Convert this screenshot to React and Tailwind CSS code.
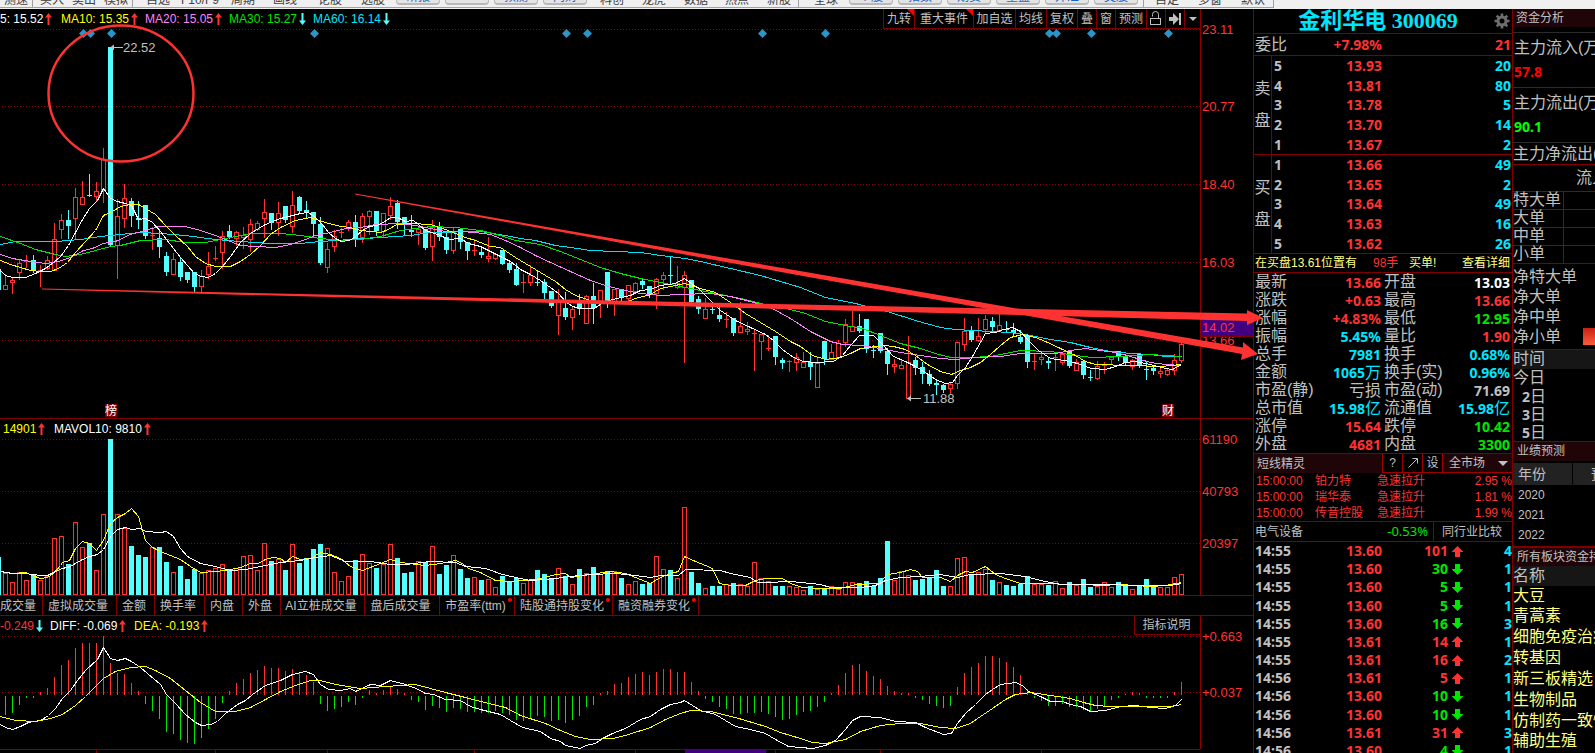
import { Fragment } from 'react'

// [up, high, body top, body bottom, low]
const candles = [
  [1,274,285,289,289],[1,277,280,282,293],[1,259,263,272,279],[1,255,261,262,267],[0,255,260,270,272],[1,265,270,271,286],
  [1,256,260,268,269],[1,223,239,270,270],[1,214,220,229,238],[0,210,220,226,238],[1,188,197,218,239],[1,181,197,204,204],
  [0,174,195,195,196],[1,182,191,196,201],[1,148,159,190,202],[0,47,47,245,246],[1,199,216,245,278],[1,184,198,218,227],
  [0,198,201,216,226],[0,201,218,220,228],[0,205,205,236,238],[1,227,235,236,249],[0,229,238,247,257],[0,252,256,272,275],
  [1,253,259,274,274],[0,258,262,277,280],[0,272,272,280,282],[0,272,272,287,291],[1,270,276,286,293],[1,252,266,274,278],
  [1,246,258,259,260],[1,231,236,252,268],[0,225,231,237,238],[1,231,232,238,245],[1,227,235,237,248],[1,219,224,239,251],
  [1,221,223,229,230],[1,199,212,218,237],[0,213,213,223,229],[1,202,213,222,235],[0,206,206,220,222],[1,191,205,226,232],
  [0,196,197,211,212],[0,201,210,212,217],[0,212,212,224,236],[0,217,224,263,264],[1,243,249,267,272],[1,230,236,246,251],
  [1,228,232,233,237],[1,220,222,227,230],[0,215,222,240,246],[1,213,216,237,242],[1,210,211,216,234],[0,211,211,231,235],
  [1,213,213,231,237],[1,197,206,215,219],[0,200,203,222,228],[0,217,217,225,234],[0,215,230,232,236],[1,227,229,232,244],
  [0,229,229,248,249],[1,220,227,246,260],[0,222,227,237,240],[0,233,237,250,253],[1,227,231,250,253],[0,228,229,242,248],
  [0,242,242,251,259],[1,239,250,251,255],[0,247,252,255,257],[1,237,256,258,261],[1,253,254,258,259],[0,250,250,264,264],
  [0,261,263,270,272],[0,263,269,285,285],[1,274,282,283,292],[1,265,275,282,285],[0,270,282,283,285],[0,279,282,293,298],
  [0,291,291,306,307],[1,289,302,315,334],[0,292,308,317,319],[1,306,309,317,329],[0,294,300,309,314],[1,295,296,323,323],
  [0,283,296,308,323],[1,290,290,303,317],[0,272,272,304,307],[1,289,289,302,315],[0,289,289,298,301],[1,285,285,298,302],
  [1,282,283,291,292],[0,278,281,285,288],[0,286,286,294,297],[1,278,279,293,308],[1,272,275,279,289],[0,257,275,276,283],
  [1,266,283,287,288],[1,271,275,287,362],[0,280,280,302,302],[0,296,299,309,313],[1,298,309,318,318],[0,307,309,310,313],
  [0,307,315,319,321],[1,312,319,320,327],[0,318,318,333,335],[1,302,326,332,332],[1,322,329,331,334],[1,329,333,334,370],
  [1,334,334,341,359],[1,335,348,349,350],[0,336,336,357,364],[0,358,360,363,368],[1,360,361,362,371],[1,353,357,362,370],
  [1,352,362,367,367],[0,352,362,367,379],[1,357,363,387,387],[0,341,341,359,364],[1,344,352,359,359],[1,340,343,357,357],
  [1,319,324,342,346],[1,311,326,331,331],[0,314,326,331,332],[0,319,319,349,352],[0,345,350,351,357],[0,333,333,351,352],
  [0,348,351,364,374],[1,359,364,366,372],[1,360,365,368,368],[1,336,362,398,398],[0,357,360,368,374],[0,362,367,374,383],
  [0,370,374,384,385],[0,379,383,385,394],[0,384,385,390,392],[1,382,384,388,393],[1,342,342,383,388],[1,318,331,344,350],
  [0,326,331,340,341],[1,318,336,340,341],[1,315,319,329,332],[0,317,321,327,330],[1,313,325,330,331],[0,321,329,330,331],
  [0,323,330,333,336],[0,330,337,342,343],[0,334,335,362,367],[1,354,361,362,369],[1,353,357,359,364],[0,357,361,363,368],
  [1,353,357,358,370],[1,353,354,362,364],[0,351,351,366,367],[1,359,362,370,370],[0,361,361,375,378],[0,370,377,378,380],
  [1,361,366,378,379],[1,362,365,366,373],[1,357,357,359,364],[0,351,351,357,360],[0,354,357,363,364],[1,359,360,366,369],
  [0,353,354,366,367],[0,362,369,370,379],[0,366,368,371,374],[1,367,371,373,377],[1,369,370,374,375],[1,354,360,370,374],
  [1,341,344,360,362],
]

const volumes = [
  573,582,572,580,575,580,576,538,536,564,522,547,543,570,514,439,514,528,546,555,557,547,547,562,572,566,579,569,573,570,
  568,564,569,568,556,555,570,543,561,559,570,544,563,558,549,544,548,572,581,576,560,554,563,568,564,544,558,573,572,561,
  562,546,574,565,555,569,578,577,580,579,587,576,581,578,583,580,570,574,578,568,576,584,569,573,567,574,571,571,578,584,
  581,584,583,556,569,570,578,507,572,583,588,586,586,584,583,584,586,562,578,581,586,586,586,587,590,586,589,589,586,589,
  582,582,583,581,586,578,541,580,571,575,580,579,577,570,586,586,558,557,574,572,569,580,582,585,586,584,576,584,584,585,
  581,588,582,585,579,587,586,582,587,582,586,589,586,579,587,587,587,577,574,
]

const histogram = [
  714,712,704,697,697,692,688,677,665,660,648,643,643,643,636,663,673,674,683,691,703,710,718,731,733,739,742,743,737,728,
  718,702,691,683,679,673,670,666,668,668,671,669,672,675,682,703,710,708,706,701,704,697,690,693,690,686,689,693,699,701,
  709,705,707,711,707,708,711,711,712,712,710,712,714,719,720,717,715,716,720,719,722,719,715,706,704,693,691,684,683,677,
  674,672,675,672,669,669,672,672,682,691,698,701,706,708,713,713,712,712,711,713,716,719,718,714,711,710,706,701,693,685,
  673,665,664,671,676,679,686,691,693,693,697,699,703,705,707,705,687,673,667,663,656,656,658,662,667,675,689,697,700,705,
  705,703,706,706,709,711,708,705,699,697,694,692,693,697,697,697,697,692,682,
]

const priceLines = [
  { color: '#00e0f0', points: '0,244 15,241 55,241 80,239 100,236 120,234 140,232 160,233 185,235 215,239 240,241 270,243 300,243 320,241 350,239 380,237 410,235 430,232 480,231 505,235 520,238 535,240 555,245 570,247 590,250 640,252 660,255 685,258 700,261 730,268 760,275 780,281 800,287 825,297 855,303 890,312 915,320 940,327 955,329 990,331 1010,332 1030,335 1050,339 1070,342 1090,347 1110,351 1130,353 1150,354 1165,356 1181,356' },
  { color: '#00e600', points: '0,236 20,243 35,249 55,254 65,256 80,254 95,250 110,246 120,245 140,240 165,239 185,242 205,242 225,238 250,233 280,233 300,235 320,238 340,240 360,239 380,236 400,230 415,228 430,226 455,227 480,230 500,235 515,240 540,244 560,251 580,259 600,267 620,273 640,278 660,282 680,286 700,290 720,294 740,298 760,303 790,309 805,313 825,321 845,325 862,328 880,335 900,343 920,348 935,353 950,357 970,357 990,356 1005,353 1020,350 1050,351 1075,355 1092,357 1120,356 1150,354 1165,355 1181,356' },
  { color: '#ff80ff', points: '0,254 12,258 30,261 45,263 58,261 70,257 83,250 92,248 103,243 115,241 130,234 145,230 158,226 185,226 200,230 215,235 225,239 240,245 255,246 275,247 290,244 305,239 315,235 330,232 345,228 360,227 375,224 400,223 415,225 430,228 445,231 460,231 475,232 490,234 505,240 520,247 535,255 550,262 570,271 590,280 605,285 620,289 640,293 660,295 680,294 710,293 730,296 750,301 770,307 790,318 810,331 820,336 830,341 842,344 860,345 880,348 900,352 920,355 940,358 955,359 975,357 1000,356 1020,353 1055,353 1070,350 1085,348 1100,350 1115,352 1130,356 1150,362 1165,364 1181,365' },
  { color: '#ffff00', points: '0,260 10,264 20,267 30,270 40,271 50,271 58,268 67,262 75,252 85,241 95,230 103,215 112,211 120,206 130,204 138,204 145,208 155,214 165,225 175,235 187,246 195,256 205,263 215,266 230,266 240,261 250,254 260,245 270,234 280,227 295,220 310,217 325,222 340,226 350,227 360,230 370,231 380,232 388,229 396,224 410,223 430,224 445,229 455,233 465,237 475,240 490,246 500,247 515,257 530,266 545,275 555,281 565,289 575,295 590,300 610,303 625,302 635,298 650,294 660,288 670,286 684,283 700,288 715,292 730,302 745,313 760,322 775,331 790,341 800,346 812,355 825,359 840,357 850,353 860,348 883,345 893,346 905,349 915,355 927,364 940,371 951,374 960,370 970,367 980,362 990,354 1000,345 1010,337 1022,334 1035,337 1045,341 1060,348 1075,355 1085,361 1095,364 1130,365 1160,366 1181,364' },
  { color: '#ffffff', points: '0,270 5,275 12,277 25,277 35,273 45,268 53,262 60,256 68,245 75,232 82,219 89,208 97,200 103,188 110,198 117,201 125,203 131,205 138,219 145,218 152,222 160,231 166,239 180,257 194,273 201,276 208,277 215,273 222,266 230,256 240,242 250,233 258,228 265,224 272,221 280,218 292,215 300,213 308,212 315,217 322,224 328,232 335,238 341,241 349,240 355,236 362,230 369,226 376,225 383,222 390,217 397,217 405,221 413,220 425,230 440,235 448,239 460,238 468,243 480,246 490,251 500,256 510,261 520,269 530,274 540,280 550,287 558,293 565,301 572,306 580,308 594,308 601,303 612,299 630,295 640,290 650,289 660,285 675,283 684,278 691,283 698,288 710,300 720,310 735,320 750,327 765,334 773,340 782,349 793,357 803,361 815,362 833,361 842,355 850,345 859,335 873,335 882,344 893,356 905,361 915,366 925,372 935,379 945,383 952,382 957,375 965,367 972,356 980,342 985,333 995,332 1003,329 1012,327 1020,331 1028,340 1038,350 1050,358 1070,361 1080,364 1091,368 1105,369 1115,366 1125,362 1135,361 1150,364 1165,368 1172,369 1181,364' },
]

const volumeLines = [
  { color: '#ffff00', points: '0,571 12,573 25,572 32,575 40,578 47,577 53,573 60,565 62,562 69,560 75,548 82,541 89,543 96,550 103,540 110,523 117,517 125,513 131,508 138,516 145,540 152,547 160,551 170,555 180,559 190,566 200,572 215,571 225,570 240,567 250,563 258,563 265,559 272,557 280,558 285,562 292,556 300,559 310,558 320,552 330,554 340,558 350,566 362,570 375,565 390,559 400,562 425,565 440,563 455,560 462,563 468,568 480,572 495,580 510,581 525,580 540,578 555,574 565,573 570,577 590,574 610,571 625,573 640,579 650,583 660,577 670,573 678,571 684,556 695,561 705,565 712,568 719,583 730,585 745,585 755,580 765,578 782,578 790,583 802,587 820,588 840,588 855,584 878,583 887,574 900,572 910,569 917,571 922,577 940,577 950,581 957,575 965,571 972,572 985,566 995,574 1005,578 1020,583 1055,583 1062,584 1085,584 1100,585 1120,584 1150,586 1165,585 1181,582' },
  { color: '#ffffff', points: '0,571 12,573 25,573 40,575 47,575 55,571 62,568 70,566 80,560 89,556 97,554 103,549 110,536 117,529 125,527 131,529 140,528 145,531 160,532 166,531 173,536 180,548 187,556 200,563 215,566 230,570 245,569 265,565 280,562 300,560 315,557 330,555 345,561 370,561 390,564 405,564 430,561 455,562 465,566 485,568 502,574 520,578 530,580 555,578 570,576 590,574 615,573 635,575 650,577 660,575 678,575 685,569 720,570 730,573 750,577 757,582 765,582 790,581 800,582 820,584 830,587 860,587 875,585 885,580 900,577 920,576 940,574 957,577 970,574 1000,573 1025,576 1040,580 1060,584 1100,584 1140,585 1170,585 1181,583' },
]

const macdLines = [
  { color: '#ffffff', points: '0,724 5,727 12,729 20,726 28,722 40,720 48,715 55,708 62,698 70,690 77,680 85,670 97,659 103,647 110,658 117,660 125,658 131,661 140,667 147,673 160,684 166,694 175,703 185,714 195,722 201,725 210,724 217,721 225,713 237,704 245,700 252,694 265,685 280,680 292,674 305,671 313,674 320,684 328,689 340,690 350,688 355,691 370,684 380,685 390,680 405,684 418,689 425,693 433,694 445,699 460,700 470,706 480,709 500,714 510,720 522,727 540,731 550,738 560,741 565,745 580,748 585,745 595,743 602,738 612,733 625,728 640,719 650,716 660,709 670,704 680,702 684,700 692,705 700,710 715,714 725,720 735,726 750,729 765,733 775,739 788,746 812,748 825,745 835,740 845,729 852,720 860,716 880,717 895,721 915,722 925,727 943,734 951,733 957,723 965,713 975,704 985,694 992,689 1000,684 1015,682 1022,685 1028,691 1040,696 1050,701 1062,701 1070,704 1080,706 1090,711 1105,710 1120,706 1135,705 1150,707 1165,708 1175,705 1181,699' },
  { color: '#ffff00', points: '0,716 15,720 35,721 50,718 62,714 75,705 85,696 95,686 103,678 115,671 130,667 145,666 155,670 170,678 185,690 200,702 215,711 235,711 250,707 265,699 280,691 295,685 310,680 320,680 335,684 360,688 385,686 415,684 445,692 465,697 480,701 505,707 520,715 545,723 560,730 575,736 590,739 612,738 625,735 650,727 665,719 680,713 690,710 710,711 735,717 765,726 780,732 800,738 812,742 825,743 845,739 860,731 880,725 900,723 920,723 940,727 955,728 970,723 980,716 992,708 1005,699 1015,694 1030,692 1050,695 1070,698 1083,702 1095,705 1110,706 1150,706 1170,706 1181,704' },
]

const diamonds = [83, 90, 111, 314, 566, 587, 762, 825, 1049, 1056, 1091, 1168]

const menu = [
  ['测速', 'w-[28px]'], ['|', 'w-[8px]'], ['买入', 'w-[32px]'], ['卖出', 'w-[32px]'], ['模拟', 'w-[28px]'], ['|', 'w-[14px]'],
  ['自选', 'w-[35px]'], ['F10/F9', 'w-[50px]'], ['周期', 'w-[42px]'], ['画线', 'w-[45px]'], ['论股', 'w-[43px]'], ['选股', 'w-[35px]'],
  ['研报', 'blue'], ['', 'blue'], ['预测', 'blue'], ['问财', 'blue'], ['', 'w-[8px]'],
  ['科创', 'w-[42px]'], ['龙虎', 'w-[42px]'], ['数据', 'w-[41px]'], ['热点', 'w-[42px]'], ['新股', 'w-[31px]'], ['|', 'w-[16px]'], ['全球', 'w-[35px]'],
  ['个股', 'blue'], ['指数', 'blue'], ['期货', 'blue'], ['全盘', 'blue'], ['外汇', 'blue'], ['美股', 'blue'], ['|', 'w-[12px]'],
  ['自定', 'w-[43px]'], ['多窗', 'w-[43px]'], ['默认', 'w-[32px]'],
]

const chartTools = [
  ['九转', 'w-[31px]', true], ['重大事件', 'w-[59px]', true], ['加自选', 'w-[42px]'], ['均线', 'w-[31px]'],
  ['复权', 'w-[31px]'], ['叠', 'w-[19px]'], ['窗', 'w-[19px]'], ['预测', 'w-[31px]'],
]

const tabs = [
  ['虚拟成交量', 'w-[74px]'], ['金额', 'w-[38px]'], ['换手率', 'w-[50px]'], ['内盘', 'w-[38px]'],
  ['外盘', 'w-[38px]'], ['AI立桩成交量', 'w-[84px]'], ['盘后成交量', 'w-[75px]'], ['市盈率(ttm)', 'w-[75px]', true],
  ['陆股通持股变化', 'w-[98px]', true], ['融资融券变化', 'w-[86px]', true],
]

const sells = [[5, '13.93', 20], [4, '13.81', 80], [3, '13.78', 5], [2, '13.70', 14], [1, '13.67', 2]]
const buys = [[1, '13.66', 49], [2, '13.65', 2], [3, '13.64', 49], [4, '13.63', 16], [5, '13.62', 26]]

const RED = 'text-[#ff3232]'
const GREEN = 'text-[#00e600]'
const CYAN = 'text-[#00e6ff]'
const GRAY = 'text-[#c0c0c0]'

const stats = [
  ['最新', '13.66', RED, '', '开盘', '13.03', 'text-white', ''],
  ['涨跌', '+0.63', RED, '', '最高', '13.66', RED, ''],
  ['涨幅', '+4.83%', RED, '', '最低', '12.95', GREEN, ''],
  ['振幅', '5.45%', CYAN, '', '量比', '1.90', RED, ''],
  ['总手', '7981', CYAN, '', '换手', '0.68%', CYAN, ''],
  ['金额', '1065', CYAN, '万', '换手(实)', '0.96%', CYAN, ''],
  ['市盈(静)', '', GRAY, '亏损', '市盈(动)', '71.69', GRAY, ''],
  ['总市值', '15.98', CYAN, '亿', '流通值', '15.98', CYAN, '亿'],
  ['涨停', '15.64', RED, '', '跌停', '10.42', GREEN, ''],
  ['外盘', '4681', RED, '', '内盘', '3300', GREEN, ''],
]

const alerts = [['铂力特', '2.95'], ['瑞华泰', '1.81'], ['传音控股', '1.99']]

const ticks = [
  ['14:55', '13.60', 101, true, 4], ['14:55', '13.60', 30, false, 1], ['14:55', '13.60', 5, false, 1],
  ['14:55', '13.60', 5, false, 1], ['14:55', '13.60', 16, false, 3], ['14:55', '13.61', 14, true, 1],
  ['14:55', '13.61', 16, true, 2], ['14:56', '13.61', 5, true, 1], ['14:56', '13.60', 10, false, 1],
  ['14:56', '13.60', 10, false, 1], ['14:56', '13.61', 31, true, 3], ['14:56', '13.60', 4, false, 1],
]

const sectors = ['大豆', '青蒿素', '细胞免疫治疗', '转基因', '新三板精选', '生物制品', '仿制药一致性', '辅助生殖']

const NUM = 'font-["Noto_Sans","Noto_Sans_CJK_SC",sans-serif] text-sm font-bold'

function TrendArrow({ up }) {
  return (
    <svg className="h-3 w-[7px] shrink-0" viewBox="0 0 7 12" fill={up ? '#ff3232' : '#54ffff'} aria-hidden="true">
      <path d={up ? 'M3.5 0 7 4.5H4.5V12h-2V4.5H0z' : 'M3.5 12 7 7.5H4.5V0h-2v7.5H0z'} />
    </svg>
  )
}

function Legend({ color, width, children, up }) {
  return (
    <span className={`flex shrink-0 items-center gap-[2px] whitespace-nowrap ${color} ${width}`}>
      {children}
      <TrendArrow up={up} />
    </span>
  )
}

function Grid({ rows }) {
  return rows.map(y => (
    <line key={y} x1="2" x2="1200" y1={y + 0.5} y2={y + 0.5} stroke="#900000" strokeDasharray="1 2" />
  ))
}

function Lines({ items }) {
  return items.map((line, i) => (
    <polyline key={i} points={line.points} fill="none" stroke={line.color} strokeWidth="1" shapeRendering="crispEdges" transform="translate(0.5 0.5)" />
  ))
}

function Axis({ viewBox, labels, height, children }) {
  return (
    <svg className={`w-[53px] shrink-0 ${height}`} viewBox={viewBox}>
      <rect x="0" y="0" width="1" height="753" fill="#900000" />
      {labels.map(([text, y]) => (
        <text key={text} x="2" y={y + 5} fill="#ff3232" fontSize="13" fontFamily="Liberation Sans, Arial, sans-serif">{text}</text>
      ))}
      {children}
    </svg>
  )
}

function Badge({ x, children }) {
  return (
    <g>
      <rect x={x} y="404" width="12" height="13" fill="#800000" />
      <text x={x} y="415" fontSize="12" fill="#fff">{children}</text>
    </g>
  )
}

function TopMenu() {
  return (
    <nav className="flex h-[9px] bg-[#f0f0f0] text-xs leading-[14px] text-[#404040]">
      <div className="flex h-2 items-end overflow-hidden border-r border-b border-[#a0a0a0] pl-1">
        {menu.map(([label, width], i) => {
          if (label === '|') return <span key={i} className={`h-4 shrink-0 border-l border-[#a0a0a0] ${width}`} />
          if (width === 'blue') {
            return (
              <button key={i} aria-label={label || '更多'} className="mr-[5px] mb-[2px] h-5 w-11 shrink-0 rounded-sm border border-b-2 border-[#b8b8b8] bg-[#e4e4e4] text-center leading-[22px] text-[#1464c8]">
                {label}
              </button>
            )
          }
          return label
            ? <button key={i} className={`shrink-0 text-left whitespace-nowrap ${width}`}>{label}</button>
            : <span key={i} className={`shrink-0 ${width}`} />
        })}
      </div>
    </nav>
  )
}

function PricePane() {
  return (
    <section className="flex border-b border-[#800000]">
      <div className="min-w-0 flex-1">
        <div className="flex h-5 items-start justify-between">
          <div className='flex h-5 items-center overflow-hidden font-["Liberation_Sans",Arial,sans-serif] text-xs leading-none'>
            <Legend color="text-white" width="w-[61px]" up>5: 15.52</Legend>
            <Legend color="text-[#ffff00]" width="w-[84px]" up>MA10: 15.35</Legend>
            <Legend color="text-[#ff80ff]" width="w-[84px]" up>MA20: 15.05</Legend>
            <Legend color="text-[#00e600]" width="w-[84px]">MA30: 15.27</Legend>
            <Legend color="text-[#00e6ff]" width="w-[84px]">MA60: 16.14</Legend>
          </div>
          <div className="flex h-5 shrink-0 border-b border-[#800000] text-xs leading-none">
            {chartTools.map(([label, width, flag]) => (
              <button key={label} className={`relative border-l border-[#800000] text-center whitespace-nowrap ${width}`}>
                {label}
                {flag && <span className="absolute top-0 right-0 border-t-[7px] border-l-[7px] border-t-[#ff0000] border-l-transparent" />}
              </button>
            ))}
            <button aria-label="锁定" className="flex w-[19px] items-center justify-center border-l border-[#800000]">
              <svg className="h-[15px] w-3" viewBox="0 0 12 15" fill="none" stroke="#c0c0c0">
                <rect x="0.5" y="7.5" width="10" height="6" />
                <path d="M2.5 5.5V3.5a3 3 0 0 1 6 0V7.5" />
              </svg>
            </button>
            <button aria-label="最新" className="flex w-[19px] items-center justify-center border-l border-[#800000]">
              <svg className="h-3 w-3" viewBox="0 0 12 12" fill="#c0c0c0">
                <path d="M0 4h4V0l6 6-6 6V8H0zM10 0h2v12h-2z" />
              </svg>
            </button>
            <button aria-label="菜单" className="flex w-4 items-center justify-center border-l border-[#800000]">
              <svg className="h-1 w-2" viewBox="0 0 8 4" fill="#c0c0c0"><path d="M0 0h8L4 4z" /></svg>
            </button>
          </div>
        </div>
        <svg className="block h-[389px] w-full" viewBox="0 29 1200 389" preserveAspectRatio="none">
          <Grid rows={[29, 106, 184, 262, 340]} />
          {diamonds.map(x => (
            <path key={x} d={`M${x + 0.5} 29l4.5 4.5-4.5 4.5-4.5-4.5z`} fill="#2896c8" />
          ))}
          <g shapeRendering="crispEdges">
            <rect x="0" y="269" width="1" height="21" fill="#54ffff" />
            {candles.map(([up, high, top, bottom, low], i) => {
              const x = 5 + i * 7
              const color = up ? '#ff3232' : '#54ffff'
              return (
                <g key={i}>
                  <rect x={x} y={high} width="1" height={low - high + 1} fill={color} />
                  {up && bottom - top > 1
                    ? <rect x={x - 1.5} y={top + 0.5} width="4" height={bottom - top} fill="#000" stroke={color} />
                    : <rect x={x - 2} y={top} width="5" height={Math.max(1, bottom - top)} fill={color} />}
                </g>
              )
            })}
          </g>
          <Lines items={priceLines} />
          <g fill="#c0c0c0" fontSize="13" fontFamily="Liberation Sans, Arial, sans-serif">
            <path d="M110 47.5l4-3v2.500h9v1h-9v2.500z" />
            <text x="123" y="52">22.52</text>
            <path d="M907 398.500l4-3v2.500h10v1h-10v2.500z" />
            <text x="923" y="403">11.88</text>
          </g>
          <Badge x={105}>榜</Badge>
          <Badge x={1162}>财</Badge>
        </svg>
      </div>
      <Axis
        viewBox="0 9 53 409"
        height="h-[409px]"
        labels={[['23.11', 29], ['20.77', 106], ['18.40', 184], ['16.03', 262], ['13.66', 340]]}
      >
        <rect x="1" y="319" width="52" height="17" fill="#400080" />
        <rect x="1" y="336" width="52" height="1" fill="#800000" />
        <text x="2" y="332" fill="#ff3232" fontSize="13" fontFamily="Liberation Sans, Arial, sans-serif">14.02</text>
      </Axis>
    </section>
  )
}

function VolumePane() {
  return (
    <section className="flex border-b border-[#800000]">
      <div className="min-w-0 flex-1">
        <div className='flex h-5 items-center pl-[3px] font-["Liberation_Sans",Arial,sans-serif] text-xs leading-none'>
          <Legend color="text-[#ffff00]" width="w-[51px]" up>14901</Legend>
          <Legend color="text-white" width="w-[100px]" up>MAVOL10: 9810</Legend>
        </div>
        <svg className="block h-[156px] w-full" viewBox="0 439 1200 156" preserveAspectRatio="none">
          <Grid rows={[439, 491, 543]} />
          <g shapeRendering="crispEdges">
            <rect x="0" y="557" width="1" height="38" fill="#54ffff" />
            {volumes.map((top, i) => {
              const x = 5 + i * 7
              return candles[i][0]
                ? <rect key={i} x={x - 1.5} y={top + 0.5} width="4" height={594 - top} fill="#000" stroke="#ff3232" />
                : <rect key={i} x={x - 2} y={top} width="5" height={595 - top} fill="#54ffff" />
            })}
          </g>
          <Lines items={volumeLines} />
        </svg>
      </div>
      <Axis viewBox="0 419 53 176" height="h-[176px]" labels={[['61190', 439], ['40793', 491], ['20397', 543]]} />
    </section>
  )
}

function IndicatorTabs() {
  return (
    <div className="flex h-5 overflow-hidden border-b border-[#800000] text-xs leading-none">
      <button className="w-[43px] shrink-0 border-r border-[#800000] pr-2 text-right whitespace-nowrap">成交量</button>
      {tabs.map(([label, width, dot]) => (
        <button key={label} className={`relative shrink-0 border-r border-[#800000] pr-[3px] text-center whitespace-nowrap ${width}`}>
          {label}
          {dot && <span className="absolute top-[2px] right-[2px] size-1 rounded-full bg-[#ff0000]" />}
        </button>
      ))}
    </div>
  )
}

function MacdPane() {
  return (
    <section className="flex">
      <div className="min-w-0 flex-1 border-b border-[#800000]">
        <div className="flex h-5 items-start justify-between">
          <div className='flex h-5 items-center font-["Liberation_Sans",Arial,sans-serif] text-xs leading-none'>
            <Legend color={RED} width="w-[50px]">-0.249</Legend>
            <Legend color="text-white" width="w-[84px]" up>DIFF: -0.069</Legend>
            <Legend color="text-[#ffff00]" width="w-[84px]" up>DEA: -0.193</Legend>
          </div>
          <button className="h-[19px] w-[66px] border-b border-l border-[#800000] pr-[2px] text-xs leading-none">指标说明</button>
        </div>
        <svg className="block h-[113px] w-full" viewBox="0 636 1200 113" preserveAspectRatio="none">
          <Grid rows={[636, 692]} />
          <g shapeRendering="crispEdges">
            {histogram.map((end, i) => (
              end < 695
                ? <rect key={i} x={5 + i * 7} y={end} width="1" height={695 - end} fill="#ff3232" />
                : <rect key={i} x={5 + i * 7} y="696" width="1" height={end - 695} fill="#00e600" />
            ))}
          </g>
          <Lines items={macdLines} />
        </svg>
      </div>
      <Axis viewBox="0 616 53 133" height="h-[133px]" labels={[['+0.663', 636], ['+0.037', 692]]} />
    </section>
  )
}

function TimeScroll() {
  return (
    <svg className="block h-1 w-full" viewBox="0 0 1253 4" preserveAspectRatio="none">
      <rect x="685" y="0" width="80" height="4" fill="#400080" />
      {[96, 215, 327, 474, 635, 765, 775, 880, 1041].map(x => (
        <rect key={x} x={x} y="0" width="1" height="4" fill="#800000" />
      ))}
    </svg>
  )
}

function BookSide({ name, rows }) {
  return (
    <div className="flex h-[99px] border-b border-[#800000] first-of-type:h-[100px]">
      <div className="flex w-[18px] flex-col items-center justify-center gap-4 border-r border-[#800000] text-base leading-4">
        <span>{name}</span>
        <span>盘</span>
      </div>
      <table className={`flex-1 leading-[19px] ${NUM}`}>
        <tbody>
          {rows.map(([level, price, qty]) => (
            <tr key={level}>
              <td className="w-6 p-0 pl-[2px] leading-[19px]">{level}</td>
              <td className={`w-[86px] p-0 text-right leading-[19px] ${RED}`}>{price}</td>
              <td className={`p-0 pr-[1px] text-right leading-[19px] ${CYAN}`}>{qty}</td>
            </tr>
          ))}
        </tbody>
      </table>
    </div>
  )
}

function QuotePanel() {
  return (
    <aside className="w-[260px] shrink-0 overflow-hidden border-x border-[#800000]">
      <header className="flex h-6 items-center">
        <h1 className={`flex-1 pl-2 text-center font-["Liberation_Serif","Noto_Sans_CJK_SC",serif] text-[22px] leading-6 font-bold whitespace-nowrap ${CYAN}`}>
          金利华电 300069
        </h1>
        <button aria-label="设置" className="mr-[2px]">
          <svg className="size-4" viewBox="-8 -8 16 16" fill="none" stroke="#6e6e6e">
            <circle r="4" strokeWidth="3" />
            {[0, 45, 90, 135].map(a => (
              <path key={a} d="M0-7.500V-4.500M0 4.500V7.500" strokeWidth="2.600" transform={`rotate(${a})`} />
            ))}
          </svg>
        </button>
      </header>
      <div className="flex h-[23px] items-center border-y border-[#800000] text-base leading-none whitespace-nowrap">
        <span className="w-[50px] pl-[1px]">委比</span>
        <span className={`w-[78px] text-right leading-5 ${NUM} ${RED}`}>+7.98%</span>
        <span className={`flex-1 pr-[1px] text-right leading-5 ${NUM} ${RED}`}>21</span>
      </div>
      <BookSide name="卖" rows={sells} />
      <BookSide name="买" rows={buys} />
      <div className="flex h-[18px] items-center text-xs leading-none whitespace-nowrap text-[#ffff80]">
        <span className="w-[119px] pl-[1px]">在买盘13.61位置有</span>
        <span className={`w-9 ${RED}`}>98手</span>
        <span className="flex-1">买单!</span>
        <a href="#detail" className="pr-[2px]">查看详细</a>
      </div>
      <dl className="grid grid-cols-[44px_83px_60px_1fr] border-t border-[#800000] text-base leading-[18px] whitespace-nowrap">
        {stats.map(([a, av, ac, au, b, bv, bc, bu]) => (
          <Fragment key={a}>
            <dt className="pl-[1px]">{a}</dt>
            <dd className={`h-[18px] text-right ${ac}`}><span className={NUM}>{av}</span>{au}</dd>
            <dt className="pl-[3px]">{b}</dt>
            <dd className={`h-[18px] pr-[2px] text-right ${bc}`}><span className={NUM}>{bv}</span>{bu}</dd>
          </Fragment>
        ))}
      </dl>
      <div className="flex h-5 border-t border-[#800000] bg-[#200508] text-xs leading-none">
        <h2 className="flex flex-1 items-center pl-[3px]">短线精灵</h2>
        <button className="w-5 border-b border-l border-[#a00000] bg-black">?</button>
        <button aria-label="弹出" className="flex w-5 items-center justify-center border-b border-l border-[#a00000] bg-black">
          <svg className="size-[10px]" viewBox="0 0 10 10" fill="none" stroke="#c0c0c0"><path d="M0.500 9.500 9 1M4.500 0.500h5v5" /></svg>
        </button>
        <button className="w-5 border-b border-l border-[#a00000] bg-black">设</button>
        <label className="relative flex w-[70px] items-center border-b border-l border-[#a00000]">
          <select aria-label="市场" defaultValue="all" className="w-full appearance-none bg-transparent pl-[6px] leading-4 outline-none">
            <option value="all">全市场</option>
          </select>
          <svg className="pointer-events-none absolute right-1 h-[5px] w-[10px]" viewBox="0 0 10 5" fill="#c0c0c0"><path d="M0 0h10L5 5z" /></svg>
        </label>
      </div>
      <ul className={`h-12 text-xs leading-4 ${RED}`}>
        {alerts.map(([name, pct]) => (
          <li key={name} className="flex whitespace-nowrap">
            <span className="w-[61px] pl-[2px]">15:00:00</span>
            <span className="w-[62px]">{name}</span>
            <span className="flex-1">急速拉升</span>
            <span>{pct} %</span>
          </li>
        ))}
      </ul>
      <div className="flex h-[21px] items-stretch border-y border-[#800000] text-xs leading-none">
        <span className="flex flex-1 items-center pl-[1px]">电气设备</span>
        <span className={`flex items-center pr-[5px] font-["Noto_Sans",sans-serif] text-[13px] ${GREEN}`}>-0.53%</span>
        <button className="w-[79px] border-l border-[#800000] pr-[2px]">同行业比较</button>
      </div>
      <ul className={`flex h-[218px] flex-col justify-between leading-[18px] ${NUM}`}>
        {ticks.map(([time, price, vol, up, n], i) => (
          <li key={i} className="flex h-[18px] items-center">
            <span className="w-[60px] pl-[1px]">{time}</span>
            <span className={`w-[68px] text-right ${RED}`}>{price}</span>
            <span className={`w-[66px] text-right ${up ? RED : GREEN}`}>{vol}</span>
            <svg className="ml-1 size-[11px]" viewBox="0 0 11 11" fill={up ? '#ff3232' : '#00e600'} aria-hidden="true">
              <path d={up ? 'M5.500 0 11 5.500V6H8v5H3V6H0v-.5z' : 'M5.500 11 11 5.500V5H8V0H3v5H0v.5z'} />
            </svg>
            <span className={`flex-1 text-right ${CYAN}`}>{n}</span>
          </li>
        ))}
      </ul>
    </aside>
  )
}

function FundPanel() {
  return (
    <aside className="w-[82px] shrink-0 overflow-hidden text-base leading-none whitespace-nowrap">
      <h2 className="flex h-[18px] items-center bg-[#200508] pl-[3px] text-xs">资金分析</h2>
      <div className="mt-[5px] h-14 border-y border-[#2c2c2c] pl-[1px]">
        <p className="flex h-[30px] items-center">主力流入(万)</p>
        <p className={`flex h-[18px] items-center text-[#ff0000] ${NUM}`}>57.8</p>
      </div>
      <div className="h-[55px] border-b border-[#2c2c2c] pl-[1px]">
        <p className="flex h-[30px] items-center">主力流出(万)</p>
        <p className={`flex h-[18px] items-center text-[#00ff00] ${NUM}`}>90.1</p>
      </div>
      <p className="flex h-[22px] items-center border-b border-[#800000]">主力净流出(万)</p>
      <table className="w-[120px] border-collapse">
        <thead>
          <tr className="h-[26px] border-b border-[#2c2c2c]"><th className="w-[50px]" /><th className="p-0 pl-[13px] text-left font-normal">流入</th></tr>
        </thead>
        <tbody>
          {['特大单', '大单', '中单', '小单'].map(name => (
            <tr key={name} className="h-[18px] border-b border-[#2c2c2c] last:border-[#800000]">
              <th className="w-[50px] border-r border-[#2c2c2c] p-0 text-left font-normal">{name}</th>
              <td className="p-0" />
            </tr>
          ))}
        </tbody>
      </table>
      <div className="h-[86px] border-b border-[#800000] pt-[3px] leading-5">
        <p>净特大单</p>
        <p>净大单</p>
        <p>净中单</p>
        <div className="flex items-center justify-between">
          净小单
          <span className="h-[17px] w-3 bg-gradient-to-b from-[#c81e14] to-[#ff5a3c]" />
        </div>
      </div>
      <p className="flex h-[19px] items-center bg-[#161616]">时间</p>
      <ul className="leading-[18px]">
        <li className="h-[18px]">今日</li>
        {[2, 3, 5].map(n => (
          <li key={n} className="h-[18px] pl-[9px]"><span className={NUM}>{n}</span>日</li>
        ))}
      </ul>
      <h2 className="flex h-5 items-center border-t border-[#800000] bg-[#200508] pl-1 text-xs">业绩预测</h2>
      <div className="flex h-6 gap-[1px] pt-[2px] text-sm leading-none">
        <span className="flex w-[59px] shrink-0 items-center bg-[#222222] pl-[5px]">年份</span>
        <span className="flex w-20 shrink-0 items-center bg-[#222222] pl-[18px]">预测</span>
      </div>
      <ul className="h-[61px] pl-[5px] text-xs leading-5">
        <li>2020</li>
        <li>2021</li>
        <li>2022</li>
      </ul>
      <h2 className="flex h-5 items-center border-t-2 border-[#800000] bg-[#200508] pl-1 text-xs">所有板块资金持仓</h2>
      <p className="flex h-5 items-center bg-[#161616]">名称</p>
      <ul className="flex h-[166px] flex-col justify-between leading-5 text-[#ffff80]">
        {sectors.map(name => <li key={name} className="h-5">{name}</li>)}
      </ul>
    </aside>
  )
}

function Drawings() {
  return (
    <svg className="pointer-events-none absolute top-0 left-0 h-auto w-full" viewBox="0 0 1595 753" fill="#ff3232">
      <ellipse cx="121" cy="93.500" rx="72.500" ry="68" fill="none" stroke="#ff3232" strokeWidth="2.500" />
      <path d="M355 193.500 800 271 1243 347.500 1243 342 1258 354 1241 360 1242 354 800 275.500 355 194.500z" />
      <path d="M42 288.500 800 304.500 1247 313.500V310L1263 318 1247 325V321L800 309.500 42 289.500z" />
    </svg>
  )
}

export default function App() {
  return (
    <div className='relative h-screen overflow-hidden bg-black font-["Liberation_Sans","Noto_Sans_CJK_SC",sans-serif] text-[#c0c0c0]'>
      <TopMenu />
      <main className="flex">
        <div className="min-w-0 flex-1">
          <PricePane />
          <VolumePane />
          <IndicatorTabs />
          <MacdPane />
          <TimeScroll />
        </div>
        <QuotePanel />
        <FundPanel />
      </main>
      <Drawings />
    </div>
  )
}
